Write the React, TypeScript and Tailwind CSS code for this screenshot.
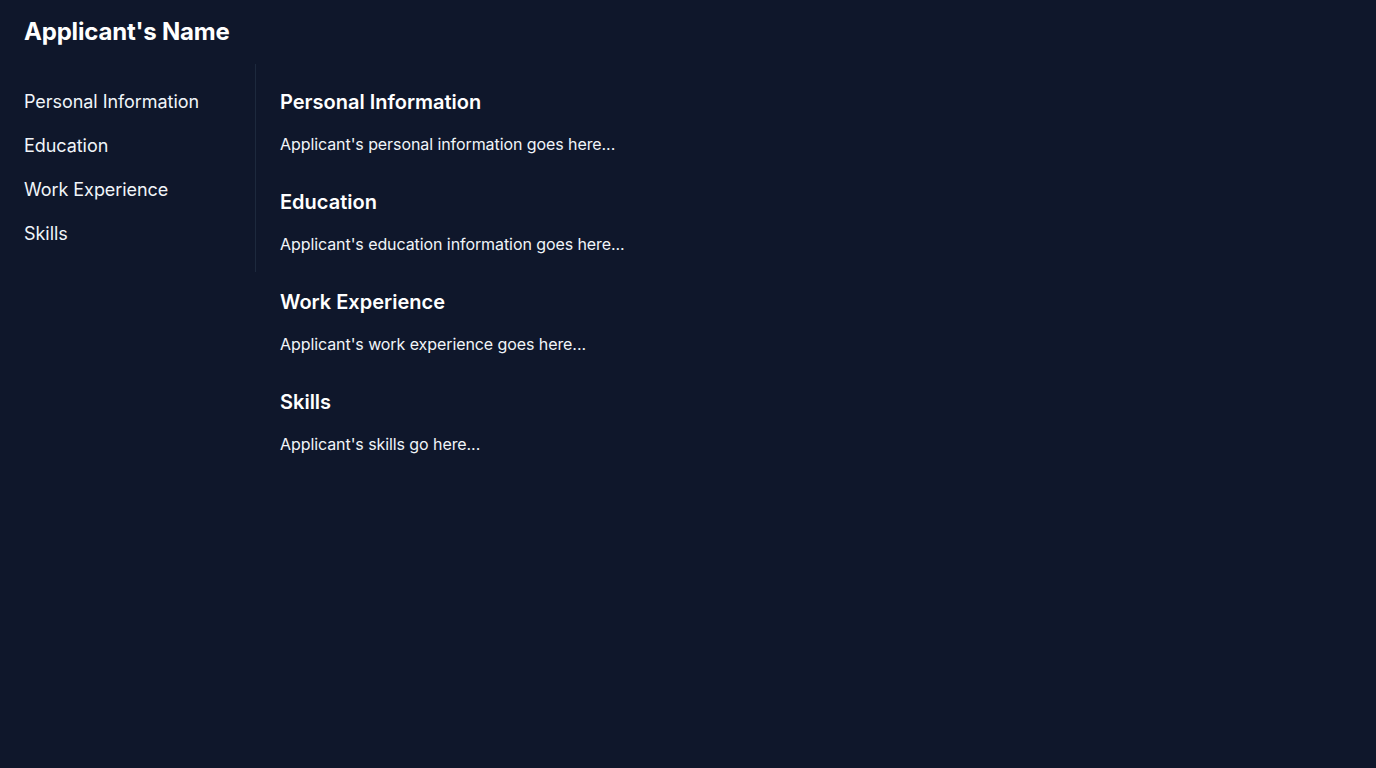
export default function App() {
  const sections = [
    { title: "Personal Information", body: "Applicant's personal information goes here..." },
    { title: "Education", body: "Applicant's education information goes here..." },
    { title: "Work Experience", body: "Applicant's work experience goes here..." },
    { title: "Skills", body: "Applicant's skills go here..." },
  ];

  return (
    <div className="min-h-screen bg-slate-900 text-white font-['Inter',sans-serif]">
      <header className="px-6 py-4">
        <h1 className="text-2xl font-bold tracking-[-0.008em]">Applicant's Name</h1>
      </header>
      <div className="flex items-start">
        <nav className="w-64 shrink-0 border-r border-slate-800 p-6">
          <ul className="space-y-4">
            {sections.map((s) => (
              <li key={s.title} className="text-lg text-slate-100 tracking-[-0.003em]">
                {s.title}
              </li>
            ))}
          </ul>
        </nav>
        <main className="flex-1 p-6">
          {sections.map((s) => (
            <section key={s.title} className="mb-8">
              <h2 className="text-xl font-semibold leading-7 mb-4">{s.title}</h2>
              <p className="text-base text-slate-100 tracking-[-0.005em]">{s.body}</p>
            </section>
          ))}
        </main>
      </div>
    </div>
  );
}
